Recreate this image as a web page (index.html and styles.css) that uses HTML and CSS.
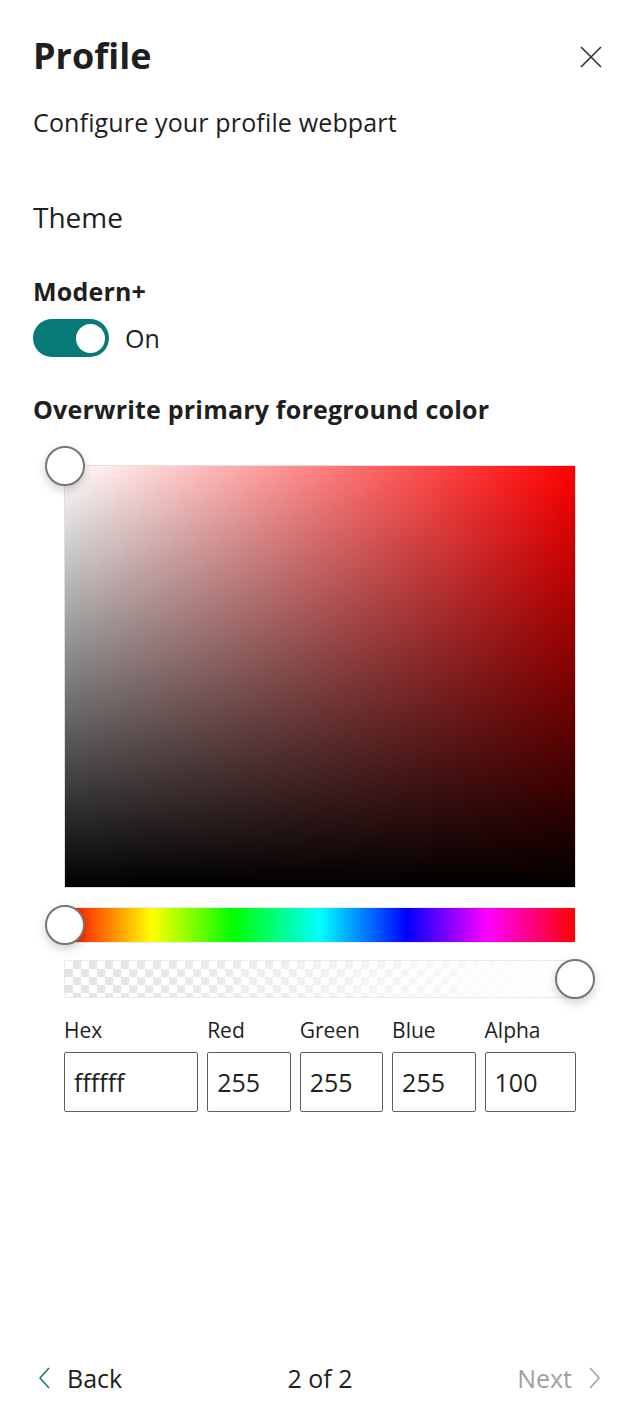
FILE: index.html
```html
<!DOCTYPE html>
<html lang="en">
<head>
<meta charset="utf-8">
<title>Profile</title>
<link rel="stylesheet" href="styles.css">
</head>
<body>
<div class="panel">
  <header class="head">
    <h1 class="title">Profile</h1>
    <button class="close" aria-label="Close">
      <svg width="22" height="22" viewBox="0 0 22 22"><path d="M1 1 L21 21 M21 1 L1 21" stroke="#323130" stroke-width="1.6" fill="none"/></svg>
    </button>
  </header>
  <p class="desc">Configure your profile webpart</p>
  <h2 class="section">Theme</h2>
  <div class="field">
    <div class="label">Modern+</div>
    <div class="toggle-row">
      <span class="toggle"><span class="knob"></span></span>
      <span class="toggle-text">On</span>
    </div>
  </div>
  <div class="label label-color">Overwrite primary foreground color</div>
  <div class="picker">
    <div class="sv">
      <span class="thumb sv-thumb"></span>
    </div>
    <div class="slider hue">
      <span class="thumb hue-thumb"></span>
    </div>
    <div class="slider alpha">
      <span class="alpha-fill"></span>
      <span class="thumb alpha-thumb"></span>
    </div>
    <div class="inputs">
      <label class="inp inp-hex"><span class="inp-label">Hex</span><span class="box">ffffff</span></label>
      <label class="inp"><span class="inp-label">Red</span><span class="box">255</span></label>
      <label class="inp"><span class="inp-label">Green</span><span class="box">255</span></label>
      <label class="inp"><span class="inp-label">Blue</span><span class="box">255</span></label>
      <label class="inp inp-alpha"><span class="inp-label">Alpha</span><span class="box">100</span></label>
    </div>
  </div>
  <footer class="foot">
    <span class="nav back">
      <svg width="12" height="22" viewBox="0 0 12 22"><path d="M10 1 L1 11 L10 21" stroke="#0b7a75" stroke-width="1.5" fill="none"/></svg>
      Back
    </span>
    <span class="pages">2 of 2</span>
    <span class="nav next">
      Next
      <svg width="12" height="22" viewBox="0 0 12 22"><path d="M2 1 L11 11 L2 21" stroke="#a19f9d" stroke-width="1.5" fill="none"/></svg>
    </span>
  </footer>
</div>
</body>
</html>
```

FILE: styles.css
```css
* { box-sizing: border-box; }
html, body { margin: 0; padding: 0; background: #fff; }
body {
  font-family: "Open Sans", "Noto Sans", sans-serif;
  color: #201f1e;
  width: 640px;
  height: 1418px;
}
.panel {
  height: 1418px;
  padding: 0 33px;
  display: flex;
  flex-direction: column;
}
.head {
  display: flex;
  justify-content: space-between;
  align-items: center;
  padding-top: 29px;
  height: 82px;
}
.title {
  margin: 0;
  font-size: 36px;
  font-weight: 700;
  line-height: 48px;
}
.close {
  border: 0;
  background: none;
  padding: 0;
  margin-right: 5px;
  margin-top: 2px;
  width: 22px;
  height: 22px;
  display: flex;
}
.desc {
  margin: 24px 0 0;
  font-size: 25px;
  line-height: 32px;
  letter-spacing: 0.15px;
}
.section {
  margin: 61px 0 0;
  font-size: 28px;
  font-weight: 400;
  line-height: 36px;
}
.field { margin-top: 40px; }
.label {
  font-size: 25px;
  font-weight: 700;
  line-height: 32px;
  letter-spacing: 0.2px;
}
.toggle-row {
  display: flex;
  align-items: center;
  gap: 16px;
  margin-top: 12px;
}
.toggle {
  width: 76px;
  height: 38px;
  border-radius: 19px;
  background: #077a77;
  display: flex;
  align-items: center;
  justify-content: flex-end;
  padding-right: 4px;
}
.knob {
  width: 29px;
  height: 29px;
  border-radius: 50%;
  background: #fff;
}
.toggle-text {
  font-size: 25px;
  line-height: 32px;
}
.label-color { margin-top: 36px; }
.picker {
  margin: 40px 0 0 31px;
  width: 512px;
  position: relative;
}
.sv {
  position: relative;
  height: 423px;
  border: 1px solid #e1dfdd;
  background:
    linear-gradient(to bottom, rgba(0,0,0,0), #000),
    linear-gradient(to right, #fff, rgba(255,255,255,0)),
    #ff0000;
}
.thumb {
  position: absolute;
  width: 40px;
  height: 40px;
  border-radius: 50%;
  background: #fff;
  border: 2px solid #7a7574;
  box-shadow: 0 4px 10px rgba(0,0,0,0.18);
}
.sv-thumb { left: -20px; top: -20px; }
.slider {
  position: relative;
  height: 36px;
  border: 1px solid #edebe9;
  border-radius: 2px;
}
.hue {
  margin-top: 19px;
  background: linear-gradient(to right, #f00 0%, #ff0 17%, #0f0 33%, #0ff 50%, #00f 67%, #f0f 83%, #f00 100%);
}
.hue-thumb { left: -20px; top: -3px; }
.alpha {
  margin-top: 17px;
  height: 38px;
  background-color: #fff;
  background-image:
    linear-gradient(45deg, #e3e3e3 25%, transparent 25%, transparent 75%, #e3e3e3 75%),
    linear-gradient(45deg, #e3e3e3 25%, transparent 25%, transparent 75%, #e3e3e3 75%);
  background-size: 16px 16px;
  background-position: 0 0, 8px 8px;
}
.alpha-fill {
  position: absolute;
  inset: 0;
  background: linear-gradient(to right, rgba(255,255,255,0), #fff);
}
.alpha-thumb { right: -20px; top: -2px; }
.inputs {
  display: flex;
  gap: 9px;
  margin-top: 17px;
}
.inp {
  display: flex;
  flex-direction: column;
  width: 84px;
}
.inp-hex { width: 135px; }
.inp-alpha { width: 92px; }
.inp-label {
  font-size: 21px;
  line-height: 30px;
  margin-bottom: 7px;
}
.box {
  height: 60px;
  border: 1.5px solid #605e5c;
  border-radius: 2px;
  padding: 0 8px 0 9px;
  display: flex;
  align-items: center;
  font-size: 25px;
}
.foot {
  margin-top: auto;
  height: 80px;
  padding-bottom: 1px;
  display: grid;
  grid-template-columns: 1fr auto 1fr;
  align-items: center;
  font-size: 25px;
}
.nav { display: flex; align-items: center; gap: 16px; }
.back { margin-left: 6px; justify-self: start; }
.next { color: #a19f9d; margin-right: 7px; justify-self: end; }
.pages { justify-self: center; }
```
